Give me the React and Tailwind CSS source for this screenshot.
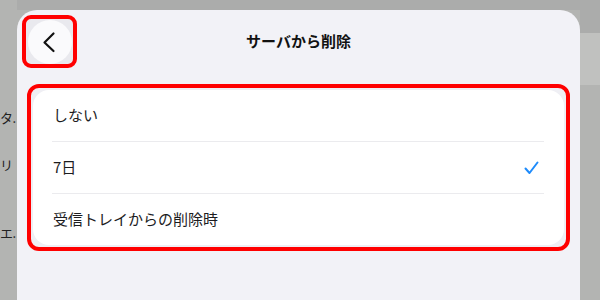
const jp = { fontFamily: '"Noto Sans CJK JP", "Noto Sans", sans-serif' };

function BackButton() {
  return (
    <div className="w-[55px] h-[53px] rounded-[9px] border-4 border-[#ff0000] bg-[#e9e9ee] flex items-center justify-center">
      <div className="w-[44px] h-[44px] rounded-full bg-[#fafafc] flex items-center justify-center">
        <svg width="24" height="24" viewBox="0 0 24 24" fill="none">
          <path d="M15.5 3.5 L6.5 12.5 L15.5 21" stroke="#111" strokeWidth="2.2" strokeLinecap="round" strokeLinejoin="round" />
        </svg>
      </div>
    </div>
  );
}

function Row({ label, checked }) {
  return (
    <div className="h-[51px] pl-[20px] pr-[25px] flex items-center justify-between">
      <span className="text-[15px] text-[#1c1c1e]">{label}</span>
      {checked && (
        <svg width="15" height="14" viewBox="0 0 15 14" fill="none">
          <path d="M1.5 7.5 L5.5 12 L13.5 1.5" stroke="#1e8bfb" strokeWidth="2" strokeLinecap="round" strokeLinejoin="round" />
        </svg>
      )}
    </div>
  );
}

export default function App() {
  return (
    <div className="w-[600px] h-[300px] overflow-hidden flex bg-[#b3b4b2]" style={jp}>
      <div className="w-[17px] shrink-0 flex flex-col text-[13px] text-[#222] whitespace-nowrap">
        <div className="mt-[108px] leading-[20px] tracking-[-0.5px]">タ.</div>
        <div className="mt-[27px] leading-[20px]">リ</div>
        <div className="mt-[48px] leading-[20px] tracking-[-0.5px]">エ.</div>
      </div>

      <div className="flex-1 flex flex-col">
        <div className="h-[10px] shrink-0 bg-[#abacab]" />
        <div className="flex-1 bg-[#f2f2f7] rounded-t-[20px]">
          <div className="grid grid-cols-[55px_1fr_55px] items-center px-[5px] pt-[5px]">
            <BackButton />
            <div className="text-center text-[15px] font-bold text-[#111]">サーバから削除</div>
            <div />
          </div>

          <div className="mx-[10px] mt-[16px] border-4 border-[#ff0000] rounded-[12px] p-[2px] bg-[#efeff4]">
            <div className="bg-white rounded-[16px]">
              <Row label="しない" />
              <div className="h-px bg-[#ebebee] ml-[19px] mr-[20px]" />
              <Row label="7日" checked />
              <div className="h-px bg-[#ebebee] ml-[19px] mr-[20px]" />
              <Row label="受信トレイからの削除時" />
            </div>
          </div>
        </div>
      </div>

      <div className="w-[20px] shrink-0 flex flex-col">
        <div className="h-[33px] bg-[#abacab]" />
        <div className="h-[52px] bg-[#c0c1bf]" />
        <div className="flex-1 bg-[#b3b4b2]" />
      </div>
    </div>
  );
}
